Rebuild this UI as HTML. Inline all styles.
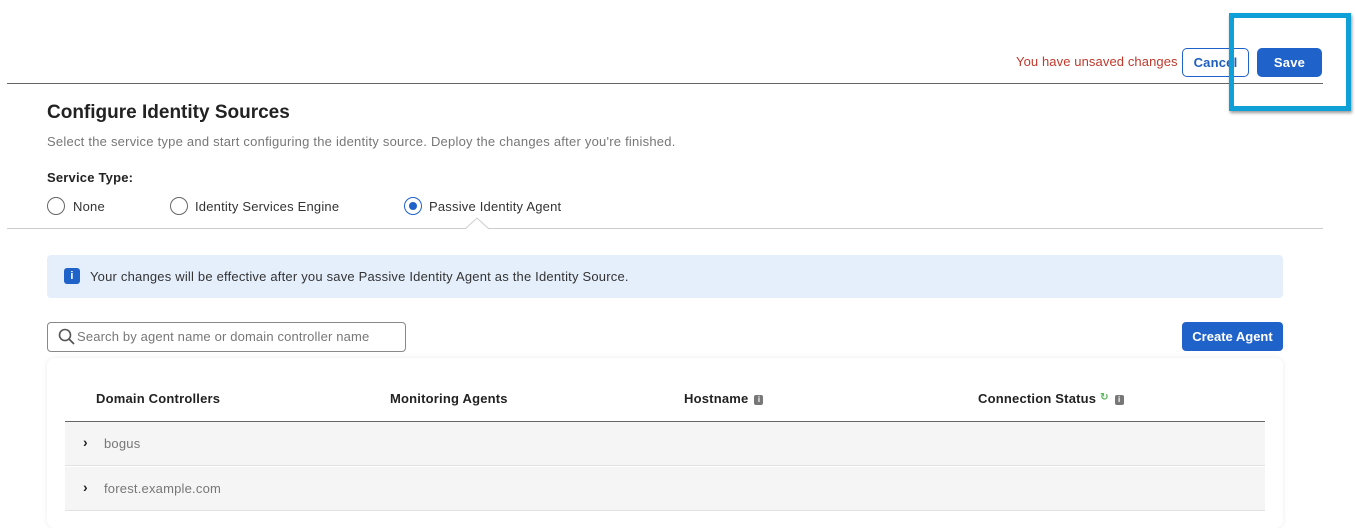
<!DOCTYPE html>
<html><head><meta charset="utf-8"><style>
*{box-sizing:border-box;margin:0;padding:0}
body{width:1355px;height:522px;overflow:hidden;background:#fff;font-family:"Liberation Sans",Arial,sans-serif;position:relative;color:#222;letter-spacing:0.2px}
.a{position:absolute;white-space:nowrap}
.radio{position:absolute;width:18px;height:18px;border:1px solid #666;border-radius:50%;background:#fff}
.info{display:inline-block;width:9px;height:10px;background:#777;border-radius:2px;color:#fff;font-size:8px;line-height:10px;text-align:center;font-weight:bold;vertical-align:1px;margin-left:6px;letter-spacing:0}
</style></head><body>
<div class="a" style="left:1016px;top:54px;font-size:13px;color:#c0392b;letter-spacing:0.1px">You have unsaved changes</div>
<div class="a" style="left:1182px;top:48px;width:67px;height:29px;border:1px solid #1f62c9;border-radius:5px;color:#1f5fbf;font-weight:bold;font-size:13px;line-height:27px;text-align:center">Cancel</div>
<div class="a" style="left:1257px;top:48px;width:65px;height:29px;background:#1f62c9;border-radius:5px;color:#fff;font-weight:bold;font-size:13px;line-height:29px;text-align:center">Save</div>
<div class="a" style="left:7px;top:83px;width:1316px;height:1px;background:#666"></div>
<div class="a" style="left:1229px;top:13px;width:122px;height:98px;border:5px solid #0fa0d8;box-shadow:1px 2px 3px rgba(0,0,0,.4)"></div>

<div class="a" style="left:47px;top:102px;font-size:19px;font-weight:bold;color:#222;letter-spacing:0">Configure Identity Sources</div>
<div class="a" style="left:47px;top:134px;font-size:13px;color:#777;letter-spacing:0.23px">Select the service type and start configuring the identity source. Deploy the changes after you're finished.</div>
<div class="a" style="left:47px;top:170px;font-size:13px;font-weight:bold;color:#222">Service Type:</div>
<div class="radio" style="left:47px;top:197px"></div>
<div class="a" style="left:73px;top:199px;font-size:13px;color:#333">None</div>
<div class="radio" style="left:170px;top:197px"></div>
<div class="a" style="left:195px;top:199px;font-size:13px;color:#333">Identity Services Engine</div>
<div class="radio" style="left:404px;top:197px;border-color:#1f62c9"><div style="position:absolute;left:4px;top:4px;width:8px;height:8px;border-radius:50%;background:#1f62c9"></div></div>
<div class="a" style="left:429px;top:199px;font-size:13px;color:#333">Passive Identity Agent</div>
<div class="a" style="left:7px;top:228px;width:1316px;height:1px;background:#ccc"></div>
<svg class="a" style="left:465px;top:217px" width="30" height="13"><path d="M0 12 L12 1 L24 12" fill="#fff" stroke="#ccc"/></svg>

<div class="a" style="left:47px;top:255px;width:1236px;height:43px;background:#e5effc;border-radius:4px"></div>
<div class="a" style="left:64px;top:268px;width:16px;height:16px;background:#1f62c9;border-radius:3px;color:#fff;font-size:11px;font-weight:bold;text-align:center;line-height:16px">i</div>
<div class="a" style="left:90px;top:269px;font-size:13px;color:#333">Your changes will be effective after you save Passive Identity Agent as the Identity Source.</div>

<div class="a" style="left:47px;top:322px;width:359px;height:30px;border:1px solid #888;border-radius:4px"></div>
<svg class="a" style="left:58px;top:328px" width="18" height="18"><circle cx="7" cy="7" r="5.5" fill="none" stroke="#555" stroke-width="1.6"/><path d="M11 11 L16 16" stroke="#555" stroke-width="1.8"/></svg>
<div class="a" style="left:77px;top:329px;font-size:13px;color:#777;letter-spacing:0.15px">Search by agent name or domain controller name</div>
<div class="a" style="left:1182px;top:322px;width:101px;height:29px;background:#1f62c9;border-radius:4px;color:#fff;font-weight:bold;font-size:13px;line-height:29px;text-align:center;letter-spacing:0">Create Agent</div>

<div class="a" style="left:47px;top:358px;width:1236px;height:170px;background:#fff;border-radius:8px;box-shadow:0 0 6px rgba(0,0,0,.08)"></div>
<div class="a" style="left:96px;top:391px;font-size:13px;font-weight:bold;color:#222">Domain Controllers</div>
<div class="a" style="left:390px;top:391px;font-size:13px;font-weight:bold;color:#222">Monitoring Agents</div>
<div class="a" style="left:684px;top:391px;font-size:13px;font-weight:bold;color:#222">Hostname<span class="info">i</span></div>
<div class="a" style="left:978px;top:391px;font-size:13px;font-weight:bold;color:#222">Connection Status <span style="color:#5cb85c;font-size:10px;vertical-align:3px">↻</span><span class="info">i</span></div>
<div class="a" style="left:65px;top:421px;width:1200px;height:1px;background:#666"></div>
<div class="a" style="left:65px;top:422px;width:1200px;height:44px;background:#f5f5f5;border-bottom:1px solid #e2e2e2"></div>
<div class="a" style="left:65px;top:467px;width:1200px;height:44px;background:#f5f5f5;border-bottom:1px solid #e2e2e2"></div>
<div class="a" style="left:83px;top:434px;font-size:14px;font-weight:bold;color:#222">›</div>
<div class="a" style="left:104px;top:436px;font-size:13px;color:#777">bogus</div>
<div class="a" style="left:83px;top:479px;font-size:14px;font-weight:bold;color:#222">›</div>
<div class="a" style="left:104px;top:481px;font-size:13px;color:#777">forest.example.com</div>
</body></html>
